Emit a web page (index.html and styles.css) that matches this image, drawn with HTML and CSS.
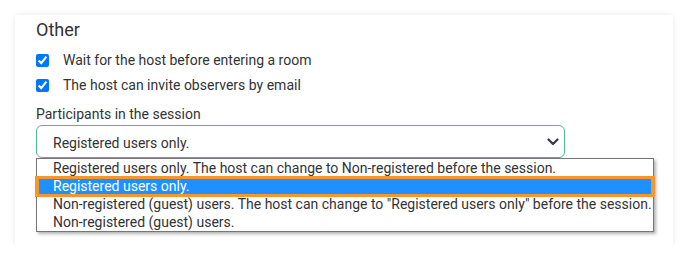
FILE: index.html
```html
<!DOCTYPE html>
<html>
<head>
<meta charset="utf-8">
<link rel="stylesheet" href="styles.css">
</head>
<body>
<div class="card">
  <h2 class="title">Other</h2>
  <label class="check-row"><input type="checkbox" checked><span>Wait for the host before entering a room</span></label>
  <label class="check-row"><input type="checkbox" checked><span>The host can invite observers by email</span></label>
  <div class="field-label">Participants in the session</div>
  <div class="select-wrap">
    <div class="select">
      <span>Registered users only.</span>
      <svg class="chev" width="12" height="8" viewBox="0 0 12 8"><path d="M1.5 1.5 L6 6 L10.5 1.5" fill="none" stroke="#343a40" stroke-width="2.2" stroke-linecap="round" stroke-linejoin="round"/></svg>
    </div>
    <div class="dropdown">
      <div class="option">Registered users only. The host can change to Non-registered before the session.</div>
      <div class="option selected">Registered users only.</div>
      <div class="option">Non-registered (guest) users. The host can change to "Registered users only" before the session.</div>
      <div class="option">Non-registered (guest) users.</div>
    </div>
  </div>
</div>
</body>
</html>
```
FILE: styles.css
```css
html, body {
  margin: 0;
  padding: 0;
  background: #ffffff;
}
body {
  font-family: Roboto, "Liberation Sans", sans-serif;
  color: #333333;
}
.card {
  margin: 15px 0 0 15px;
  width: 658px;
  height: 230px;
  box-sizing: border-box;
  padding: 4px 21px 0 21px;
  background: #ffffff;
  box-shadow: 0 0 6px rgba(0, 0, 0, 0.09);
}
.title {
  margin: 0 0 7px 0;
  font-size: 18px;
  line-height: 22px;
  font-weight: 400;
  color: #333333;
}
.check-row {
  display: flex;
  align-items: center;
  height: 25px;
  gap: 14px;
  font-size: 14px;
  color: #333333;
}
.check-row input {
  margin: 0;
  width: 13px;
  height: 13px;
  accent-color: #0075ff;
}
.check-row span {
  position: relative;
  top: -1px;
}
.field-label {
  margin-top: 6px;
  font-size: 14px;
  line-height: 20px;
  color: #333333;
}
.select-wrap {
  position: relative;
  margin-top: 1px;
}
.select {
  width: 529px;
  height: 33px;
  box-sizing: border-box;
  border: 1px solid #52b69a;
  border-radius: 6px;
  display: flex;
  align-items: center;
  justify-content: space-between;
  padding: 0 5px 0 16px;
  font-size: 14px;
  color: #333333;
  background: #ffffff;
}
.select span {
  position: relative;
  top: 1px;
}
.chev {
  display: block;
  margin-top: 1px;
}
.dropdown {
  position: absolute;
  left: 0;
  top: 33px;
  width: 618px;
  box-sizing: border-box;
  border: 1px solid #767676;
  background: #ffffff;
  box-shadow: 2px 2px 3px rgba(0, 0, 0, 0.3);
}
.option {
  height: 18px;
  line-height: 18px;
  padding-left: 16px;
  font-size: 14px;
  color: #333333;
  white-space: nowrap;
}
.option.selected {
  position: relative;
  z-index: 0;
  color: #ffffff;
}
.option.selected::before {
  content: "";
  position: absolute;
  z-index: -1;
  top: -1px;
  bottom: -2px;
  left: -2px;
  right: -2px;
  background: #1e90ff;
  border-style: solid;
  border-color: #f7962f;
  border-width: 3px 4px;
}
```
